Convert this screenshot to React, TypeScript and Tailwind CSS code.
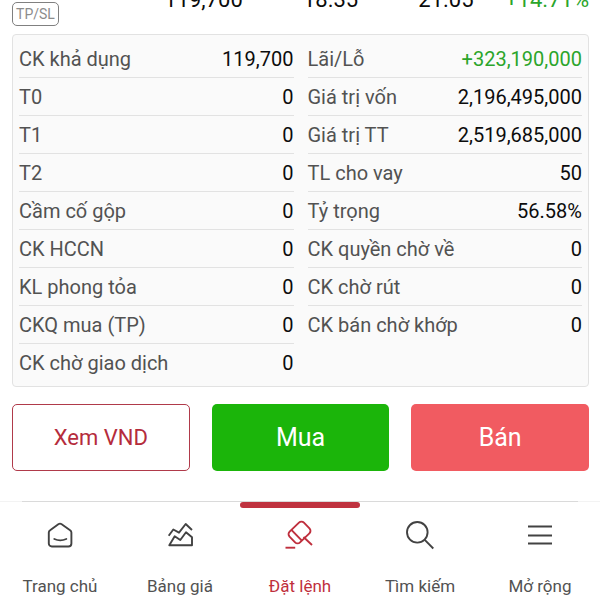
import type { ReactNode } from "react";

type Item = { label: string; value: string; gain?: boolean };

const holdings: Item[] = [
  { label: "CK khả dụng", value: "119,700" },
  { label: "T0", value: "0" },
  { label: "T1", value: "0" },
  { label: "T2", value: "0" },
  { label: "Cầm cố gộp", value: "0" },
  { label: "CK HCCN", value: "0" },
  { label: "KL phong tỏa", value: "0" },
  { label: "CKQ mua (TP)", value: "0" },
  { label: "CK chờ giao dịch", value: "0" },
];

const valuation: Item[] = [
  { label: "Lãi/Lỗ", value: "+323,190,000", gain: true },
  { label: "Giá trị vốn", value: "2,196,495,000" },
  { label: "Giá trị TT", value: "2,519,685,000" },
  { label: "TL cho vay", value: "50" },
  { label: "Tỷ trọng", value: "56.58%" },
  { label: "CK quyền chờ về", value: "0" },
  { label: "CK chờ rút", value: "0" },
  { label: "CK bán chờ khớp", value: "0" },
];

function DetailList({ items }: { items: Item[] }) {
  return (
    <dl className="min-w-0 flex-1">
      {items.map((item, i) => (
        <div
          key={item.label}
          className={`flex h-[38px] items-center justify-between border-b ${
            i < items.length - 1 ? "border-[#e2e2e2]" : "border-transparent"
          }`}
        >
          <dt className="text-[#525252]">{item.label}</dt>
          <dd className={item.gain ? "text-[#2ba52b]" : "text-[#0c0c0c]"}>{item.value}</dd>
        </div>
      ))}
    </dl>
  );
}

function Icon({ children }: { children: ReactNode }) {
  return (
    <svg
      viewBox="0 0 32 32"
      className="size-8"
      fill="none"
      stroke="currentColor"
      strokeWidth="1.9"
      strokeLinejoin="round"
      aria-hidden="true"
    >
      {children}
    </svg>
  );
}

const tabs: { label: string; active?: boolean; icon: ReactNode }[] = [
  {
    label: "Trang chủ",
    icon: (
      <>
        <path d="M14.3 5.2a3 3 0 0 1 3.4 0l8.4 6a3 3 0 0 1 1.3 2.4V24.5a3 3 0 0 1-3 3H7.8a3 3 0 0 1-3-3V13.6a3 3 0 0 1 1.300-2.400z" />
        <path d="M10.3 20Q16.300 22.800 22.300 20" strokeLinecap="round" />
      </>
    ),
  },
  {
    label: "Bảng giá",
    icon: (
      <>
        <path d="M4.7 16.7 9.3 10.5 15 13.7 21.7 5 28 11" />
        <path d="M5.3 26.3 10.7 17.3 16.3 21 22 13.3 28 18.3V26.3Z" />
      </>
    ),
  },
  {
    label: "Đặt lệnh",
    active: true,
    icon: (
      <>
        <g transform="translate(15.500 13.500) rotate(-44)">
          <rect x="-10" y="-7.500" width="20" height="15" rx="3.500" />
          <path d="M-4-7.500V7.500" />
        </g>
        <path d="M19.500 18 28 26" />
        <path d="M1.500 28.700H11.200" />
      </>
    ),
  },
  {
    label: "Tìm kiếm",
    icon: (
      <>
        <circle cx="13.3" cy="13.3" r="10.3" />
        <path d="M20.5 20.7 29.3 29.5" />
      </>
    ),
  },
  {
    label: "Mở rộng",
    icon: <path d="M4 7.500H28M4 16.500H28M4 24.500H28" />,
  },
];

export default function App() {
  return (
    <div className="flex min-h-screen flex-col overflow-hidden bg-white font-['Roboto','Noto_Sans',sans-serif]">
      <main className="flex flex-1 flex-col pr-[11px] pl-[12px]">
        {/* Summary row of the holding, scrolled partly out of view */}
        <div className="-mt-[13px] grid grid-cols-5 text-right text-[22px] leading-[26px] text-[#0c0c0c]">
          <div className="pt-[15px] text-left">
            <button
              type="button"
              className="block h-[24px] w-[47px] rounded-[5px] border border-[#808080] text-center text-[14px] leading-[22px] text-[#8c8c8c]"
            >
              TP/SL
            </button>
          </div>
          <span>119,700</span>
          <span>18.35</span>
          <span>21.05</span>
          <span className="text-[#2ba52b]">+14.71%</span>
        </div>

        <section className="mt-[8px] flex gap-[14px] rounded-[4px] border border-[#e2e2e2] bg-[#fafafa] px-[6px] pt-[5px] pb-[4px] text-[20px] leading-[24px]">
          <DetailList items={holdings} />
          <DetailList items={valuation} />
        </section>

        <div className="mt-[17px] grid h-[67px] grid-cols-3 gap-[22px]">
          <button type="button" className="rounded-[5px] border border-[#b03a4a] bg-white text-[22px] text-[#b52c3c]">
            Xem VND
          </button>
          <button type="button" className="rounded-[5px] bg-[#1bb50a] text-[25px] text-white">
            Mua
          </button>
          <button type="button" className="rounded-[5px] bg-[#f15b61] text-[25px] text-white">
            Bán
          </button>
        </div>
      </main>

      <nav className="mt-[30px]">
        <div className="bg-[#f3f3f3] px-[22px]">
          <div className="h-px bg-[#dadada]" />
        </div>
        <div className="grid grid-cols-5">
          {tabs.map((tab) => (
            <button
              key={tab.label}
              type="button"
              aria-current={tab.active ? "page" : undefined}
              className={`flex flex-col items-center pb-[4px] ${tab.active ? "text-[#bf2f3d]" : "text-[#424242]"}`}
            >
              <span className={`mb-[11px] h-[6px] w-full rounded-full ${tab.active ? "bg-[#bf323f]" : ""}`} />
              <Icon>{tab.icon}</Icon>
              <span className={`mt-[25px] text-[17px] leading-[20px] ${tab.active ? "" : "text-[#525252]"}`}>
                {tab.label}
              </span>
            </button>
          ))}
        </div>
      </nav>
    </div>
  );
}
